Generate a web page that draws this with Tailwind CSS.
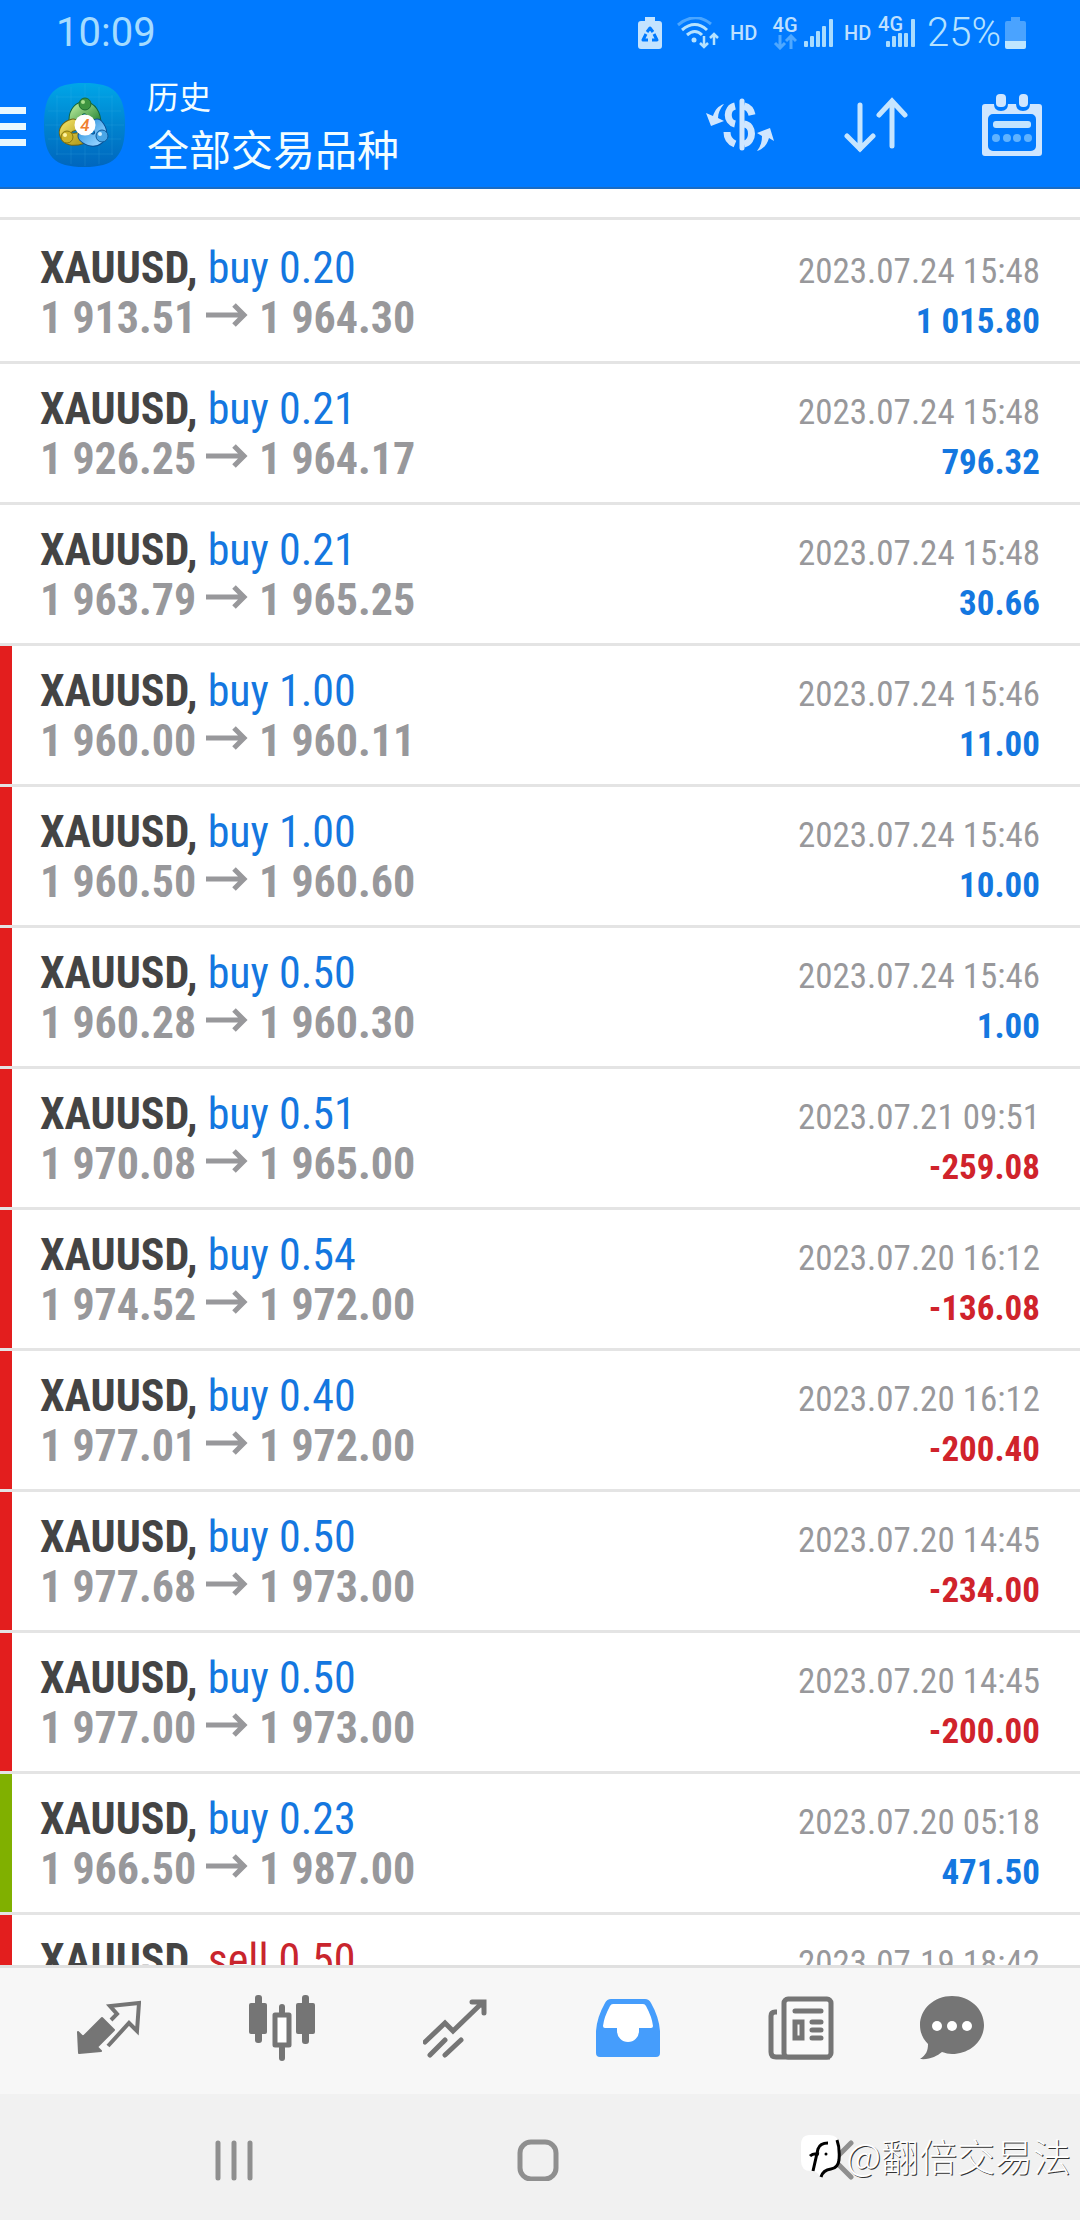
<!DOCTYPE html>
<html lang="zh-CN">
<head>
<meta charset="utf-8">
<meta name="viewport" content="width=device-width, initial-scale=1">
<title>历史</title>
<script src="https://cdn.jsdelivr.net/npm/@tailwindcss/browser@4"></script>
</head>
<body class="bg-white font-['Roboto','Noto_Sans_CJK_SC',sans-serif]">
<div class="flex h-screen flex-col overflow-hidden">

  <header class="shrink-0 border-b-2 border-[#1a6cc4] bg-[#007aff]">
    <!-- Status bar -->
    <div class="flex h-[62px] items-center pl-14 pr-[54px] pt-[3px] text-[#bfe0ff]">
      <time class="mr-auto text-[40px] leading-none text-[#a5dcff]">10:09</time>
      <svg class="h-8 w-6" viewBox="0 0 24 32" fill="none" aria-hidden="true">
        <path d="M7 0h10v4h4a3 3 0 0 1 3 3v22a3 3 0 0 1-3 3H3a3 3 0 0 1-3-3V7a3 3 0 0 1 3-3h4z" fill="#c3e3ff"/>
        <path d="M9 15l3-4 3 4M16 17l3 6h-5M10 23H5l3-6" stroke="#007aff" stroke-width="3" stroke-linejoin="round"/>
      </svg>
      <svg class="ml-[15px] h-8 w-[42px]" viewBox="0 0 42 32" fill="none" aria-hidden="true">
        <path d="M1 8Q18-6 34 7" stroke="#4ba6ff" stroke-width="3"/>
        <path d="M5 13Q18 2 30 13M10 18Q18 11 25 18" stroke="#b5e2ff" stroke-width="3"/>
        <circle cx="17" cy="23" r="2.500" fill="#b5e2ff"/>
        <path d="M27 19v11M23 26l4 4 4-4M37 28V17M33 21l4-4 4 4" stroke="#b5e2ff" stroke-width="2.500"/>
      </svg>
      <span class="ml-[11px] w-7 text-xl font-medium">HD</span>
      <span class="ml-[15px] flex w-6 flex-col items-center">
        <span class="text-xl font-medium leading-[18px]">4G</span>
        <svg class="h-4 w-6" viewBox="0 0 24 16" fill="none" stroke="#4fa8ff" stroke-width="3" aria-hidden="true"><path d="M7 1v12M2 9l5 5 5-5M18 15V3M13 7l5-5 5 5"/></svg>
      </span>
      <svg class="ml-[7px] h-7 w-[29px]" viewBox="0 0 29 28" fill="#a9dcff" aria-hidden="true"><rect x="0" y="22" width="4" height="6" rx="1"/><rect x="6" y="17" width="4" height="11" rx="1"/><rect x="12" y="12" width="4" height="16" rx="1"/><rect x="18" y="7" width="4" height="21" rx="1"/><rect x="25" y="0" width="4" height="28" rx="1"/></svg>
      <span class="ml-[11px] w-7 text-xl font-medium">HD</span>
      <span class="relative ml-[14px] h-7 w-[29px]">
        <svg class="h-7 w-[29px]" viewBox="0 0 29 28" fill="#a9dcff" aria-hidden="true"><rect x="0" y="22" width="4" height="6" rx="1"/><rect x="6" y="17" width="4" height="11" rx="1"/><rect x="12" y="14" width="4" height="14" rx="1"/><rect x="18" y="14" width="4" height="14" rx="1"/><rect x="25" y="0" width="4" height="28" rx="1"/></svg>
        <span class="absolute -left-2 -top-1 text-xl font-medium leading-[18px]">4G</span>
      </span>
      <span class="ml-3 text-[40px] font-light leading-none text-[#b5e2ff]">25%</span>
      <svg class="ml-1 h-8 w-[21px]" viewBox="0 0 21 32" aria-hidden="true"><path d="M6 0h9v4h4a2 2 0 0 1 2 2v18H0V6a2 2 0 0 1 2-2h4z" fill="#4aa3ff"/><path d="M0 24h21v6a2 2 0 0 1-2 2H2a2 2 0 0 1-2-2z" fill="#bfe6ff"/></svg>
    </div>

    <!-- App toolbar -->
    <div class="flex h-[125px] items-center pr-[38px]">
      <button type="button" aria-label="菜单" class="flex w-[26px] flex-col gap-[9px] pt-1">
        <span class="h-[7px] bg-[#e8f8ff]"></span><span class="h-[7px] bg-[#e8f8ff]"></span><span class="h-[7px] bg-[#e8f8ff]"></span>
      </button>
      <svg class="ml-[18px] h-[84px] w-[81px]" viewBox="0 0 81 84" aria-hidden="true">
        <defs>
          <linearGradient id="tile" x1="0" y1="0" x2="0" y2="1"><stop offset="0" stop-color="#00a6e8"/><stop offset=".5" stop-color="#0084cf"/><stop offset="1" stop-color="#0066bd"/></linearGradient>
          <linearGradient id="green" x1="0" y1="0" x2="1" y2="1"><stop offset="0" stop-color="#a5dc8c"/><stop offset="1" stop-color="#2c8a3a"/></linearGradient>
          <linearGradient id="gold" x1="0" y1="0" x2="1" y2="1"><stop offset="0" stop-color="#e6d458"/><stop offset="1" stop-color="#b9a322"/></linearGradient>
          <linearGradient id="blue" x1="0" y1="0" x2="1" y2="1"><stop offset="0" stop-color="#3a9be0"/><stop offset="1" stop-color="#8fd0ff"/></linearGradient>
        </defs>
        <path d="M40 0C70 0 81 10 81 42S70 84 40 84 0 74 0 42 10 0 40 0z" fill="url(#tile)"/>
        <path d="M13 12v60M27 4v77M41 1v82M55 4v77M68 12v60M4 28h73M1 42h79M4 56h73M12 71h57M12 14h57" stroke="#5cc6f0" stroke-opacity=".14" fill="none"/>
        <g fill="none" stroke-linecap="round">
          <path d="M31 37c0-17 20-17 20 4" stroke="#11633a" stroke-width="13"/><path d="M31 37c0-17 20-17 20 4" stroke="url(#green)" stroke-width="11"/>
          <path d="M37 55c-17 6-21-10-8-13" stroke="#6c6212" stroke-width="13"/><path d="M37 55c-17 6-21-10-8-13" stroke="url(#gold)" stroke-width="11"/>
          <path d="M53 42c10 11-3 21-13 11" stroke="#0a4f94" stroke-width="13"/><path d="M53 42c10 11-3 21-13 11" stroke="url(#blue)" stroke-width="11"/>
        </g>
        <circle cx="41" cy="21" r="6" fill="#3d9440" stroke="#1c6b30"/><circle cx="39" cy="19" r="2" fill="#a8e08c"/>
        <circle cx="23" cy="54" r="6" fill="#cdb42c" stroke="#86760f"/><circle cx="21" cy="52" r="2" fill="#fff4a0"/>
        <circle cx="58" cy="53" r="6" fill="#4aa6e6" stroke="#0f5a9c"/><circle cx="56" cy="51" r="2" fill="#d2f0ff"/>
        <circle cx="41" cy="42" r="10.500" fill="#fff"/>
        <text x="41" y="48" text-anchor="middle" font-family="Roboto" font-size="17" font-style="italic" font-weight="500" fill="#f08030">4</text>
      </svg>
      <div class="ml-[22px] mr-auto pt-[7px] text-[#f2fdff]">
        <h1 class="text-[32px] leading-[48px]">历史</h1>
        <p class="text-[42px] leading-[60px]">全部交易品种</p>
      </div>
      <button type="button" aria-label="货币" class="shrink-0">
        <svg class="h-[54px] w-[68px]" viewBox="0 0 68 54" fill="none" stroke="#cfe6ff" stroke-width="6" aria-hidden="true">
          <path d="M36 3v47" stroke-linecap="round" stroke-width="5"/>
          <path d="M29 8C20 10 20 24 29 26M38 8c4 1 7 4 8 9" stroke-width="7"/><path d="M38 26c10 1 10 18 0 20M21 34c0 6 3 10 8 12" stroke-width="7"/>
          <path d="M18 6c-6 2-9 6-11 12l-7-3 5 13 13-5-6-3c0-5 2-9 6-14z" fill="#cfe6ff" stroke="none"/>
          <path d="M51 53c8-3 10-7 12-13l5 3-4-13-13 5 5 3c0 5-1 10-5 15z" fill="#cfe6ff" stroke="none"/>
        </svg>
      </button>
      <button type="button" aria-label="排序" class="ml-[70px] shrink-0">
        <svg class="h-[56px] w-[64px]" viewBox="0 0 64 56" fill="none" stroke="#c6e5ff" stroke-width="5" stroke-linecap="round" aria-hidden="true">
          <path d="M16 8v44M3 39l13 13 13-13M48 49V4M35 18L48 4l13 14"/>
        </svg>
      </button>
      <button type="button" aria-label="日历" class="ml-[74px] shrink-0">
        <svg class="h-[64px] w-[60px]" viewBox="0 0 60 64" aria-hidden="true">
          <path fill-rule="evenodd" fill="#cfe6ff" d="M3 11h9q0 7 7 7t7-7h8q0 7 7 7t7-7h9a3 3 0 0 1 3 3v46a3 3 0 0 1-3 3H3a3 3 0 0 1-3-3V14a3 3 0 0 1 3-3zM11 21a5 5 0 0 0-5 5v27a5 5 0 0 0 5 5h38a5 5 0 0 0 5-5V26a5 5 0 0 0-5-5z"/>
          <rect x="14" y="1" width="10" height="13" rx="4" fill="#cfe6ff"/><rect x="37" y="1" width="9" height="13" rx="4" fill="#cfe6ff"/>
          <rect x="11" y="28" width="38" height="7" rx="3" fill="#c2e4ff"/>
          <g fill="#5fb2ff"><circle cx="14" cy="45" r="4"/><circle cx="25" cy="45" r="4"/><circle cx="35" cy="45" r="4"/><circle cx="46" cy="45" r="4"/></g>
        </svg>
      </button>
    </div>
  </header>

  <main class="min-h-0 flex-1 overflow-hidden pt-7">
    <ul id="deals" class="border-t-[3px] border-[#e4e4e4] pt-[3px] font-['Roboto_Condensed','Liberation_Sans_Narrow',sans-serif]"></ul>
  </main>

  <!-- Tabs -->
  <nav aria-label="主导航" class="flex h-[129px] shrink-0 items-center border-t-[3px] border-[#e0e0e0] bg-[#f7f7f7] pb-[6px] pl-[22px] pr-[64px] text-[#757575]">
    <a href="#quotes" aria-label="行情" class="flex flex-1 justify-center">
      <svg class="size-16" viewBox="0 0 64 64" aria-hidden="true">
        <path d="M25 22l12 12-17 17 4 4-22 2 -1-21 5 5z" fill="currentColor" stroke="currentColor" stroke-width="2" stroke-linejoin="round"/>
        <path d="M34 24l6-6-7-8 29-3-2 28-8-8-21 23" fill="none" stroke="currentColor" stroke-width="4"/>
      </svg>
    </a>
    <a href="#charts" aria-label="图表" class="flex flex-1 justify-center">
      <svg class="h-[66px] w-[66px]" viewBox="0 0 66 66" aria-hidden="true">
        <g fill="currentColor"><rect x="6" y="0" width="7" height="48" rx="3"/><rect x="0" y="8" width="18" height="31" rx="2"/><rect x="53" y="0" width="7" height="49" rx="3"/><rect x="47" y="8" width="19" height="31" rx="2"/><rect x="30" y="9" width="6" height="11" rx="3"/><rect x="30" y="50" width="6" height="16" rx="3"/></g>
        <rect x="26" y="20" width="14" height="30" fill="#fff" stroke="currentColor" stroke-width="5" stroke-linejoin="round"/>
      </svg>
    </a>
    <a href="#trade" aria-label="交易" class="flex flex-1 justify-center">
      <svg class="size-16" viewBox="0 0 64 64" fill="none" stroke="currentColor" stroke-width="5" stroke-linecap="round" aria-hidden="true">
        <path d="M2 46l20-19 8 8L59 7M49 6h12v11M7 59l15-15M22 59l16-15" /><path d="M52 4h11v13z" fill="currentColor" stroke="none"/>
      </svg>
    </a>
    <a href="#history" aria-label="历史" aria-current="page" class="flex flex-1 justify-center text-[#459dfc]">
      <svg class="size-16" viewBox="0 0 64 64" aria-hidden="true">
        <path fill="currentColor" d="M15 3h34q4 0 6 4 8 14 9 28v22q0 4-4 4H4q-4 0-4-4V35Q1 21 9 7q2-4 6-4z"/>
        <path fill="#fff" d="M17 8h30q2 0 3 2 6 11 7 20 0 2-2 2H43v3a11 11 0 0 1-22 0v-3H9q-2 0-2-2 1-9 7-20 1-2 3-2z"/>
      </svg>
    </a>
    <a href="#news" aria-label="新闻" class="flex flex-1 justify-center">
      <svg class="h-16 w-[66px]" viewBox="0 0 66 64" fill="none" stroke="currentColor" stroke-width="5" aria-hidden="true">
        <path d="M9 16H7q-4 0-4 4v36q0 5 5 5h54" stroke-linejoin="round"/>
        <rect x="16" y="3" width="47" height="58" rx="4" fill="#fafafa"/>
        <path d="M27 15h26M44 26h9M44 34h9M44 42h9" stroke-linecap="round"/>
        <rect x="27" y="26" width="7" height="16"/>
      </svg>
    </a>
    <a href="#messages" aria-label="消息" class="flex w-32 justify-center">
      <svg class="size-16" viewBox="0 0 64 64" aria-hidden="true">
        <path fill="currentColor" d="M32 0C14 0 0 13 0 29c0 8 3 14 8 19 0 7-2 11-8 15 10 1 17-3 22-7 4 1 6 2 10 2 18 0 32-13 32-29S50 0 32 0z"/>
        <g fill="#fff"><circle cx="17" cy="30" r="5"/><circle cx="32" cy="30" r="5"/><circle cx="47" cy="30" r="5"/></g>
      </svg>
    </a>
  </nav>

  <!-- System navigation -->
  <footer class="relative grid h-[126px] shrink-0 grid-cols-3 items-center justify-items-center bg-[#f1f1f1] pl-[82px] pr-[86px] pt-[5px] text-[#8f8f8f]">
    <button type="button" aria-label="最近任务"><svg class="h-[42px] w-[38px]" viewBox="0 0 38 42" fill="none" stroke="currentColor" stroke-width="5" stroke-linecap="round"><path d="M3 4v35M19 4v35M35 4v35"/></svg></button>
    <button type="button" aria-label="主屏幕"><svg class="h-[42px] w-[42px]" viewBox="0 0 42 42" fill="none" stroke="currentColor" stroke-width="5"><rect x="3" y="3" width="36" height="37" rx="11"/></svg></button>
    <button type="button" aria-label="返回"><svg class="h-[42px] w-[24px]" viewBox="0 0 24 42" fill="none" stroke="currentColor" stroke-width="5" stroke-linecap="round"><path d="M21 4L4 21l17 17"/></svg></button>
    <div class="absolute right-[9px] top-[37px] flex items-center gap-[5px]">
      <svg class="h-[48px] w-[40px]" viewBox="0 0 40 48" fill="none" aria-hidden="true">
        <path d="M8 4h20q10 0 10 10v16q0 9-9 10-7 0-10 6-2-6-9-6-10 0-10-10V14Q0 4 8 4z" fill="#fff"/>
        <path d="M36 9q3 8 2 20-1 8-8 9-8 1-10 8" stroke="#000" stroke-width="3"/>
        <path d="M12 40l5-22q2-6 10-6M9 25q3-3 9-2" stroke="#000" stroke-width="3"/>
        <circle cx="25" cy="23" r="1.500" fill="#000"/>
      </svg>
      <span class="font-['Noto_Sans_CJK_SC',sans-serif] text-[38px] font-light leading-[44px] text-white [text-shadow:1px_1px_0_#333]">@翻倍交易法</span>
    </div>
  </footer>
</div>

<script>
  // time, side, volume, open, close, profit, marker
  const deals = [
    ['2023.07.24 15:48', 'buy', '0.20', '1 913.51', '1 964.30', '1 015.80', ''],
    ['2023.07.24 15:48', 'buy', '0.21', '1 926.25', '1 964.17', '796.32', ''],
    ['2023.07.24 15:48', 'buy', '0.21', '1 963.79', '1 965.25', '30.66', ''],
    ['2023.07.24 15:46', 'buy', '1.00', '1 960.00', '1 960.11', '11.00', 'red'],
    ['2023.07.24 15:46', 'buy', '1.00', '1 960.50', '1 960.60', '10.00', 'red'],
    ['2023.07.24 15:46', 'buy', '0.50', '1 960.28', '1 960.30', '1.00', 'red'],
    ['2023.07.21 09:51', 'buy', '0.51', '1 970.08', '1 965.00', '-259.08', 'red'],
    ['2023.07.20 16:12', 'buy', '0.54', '1 974.52', '1 972.00', '-136.08', 'red'],
    ['2023.07.20 16:12', 'buy', '0.40', '1 977.01', '1 972.00', '-200.40', 'red'],
    ['2023.07.20 14:45', 'buy', '0.50', '1 977.68', '1 973.00', '-234.00', 'red'],
    ['2023.07.20 14:45', 'buy', '0.50', '1 977.00', '1 973.00', '-200.00', 'red'],
    ['2023.07.20 05:18', 'buy', '0.23', '1 966.50', '1 987.00', '471.50', 'green'],
    ['2023.07.19 18:42', 'sell', '0.50', '', '', '', 'red'],
  ];
  const marker = { '': 'bg-transparent', red: 'bg-[#e31e1e]', green: 'bg-[#80b000]' };
  const side = { buy: 'text-[#1477e0]', sell: 'text-[#c9252d]' };
  const prices = (open, close, profit) => `
        <div class="flex h-[50px] items-baseline justify-between whitespace-nowrap text-[44px] font-bold leading-[50px] text-[#98989b]">
          <span class="flex items-baseline"><span class="w-[166px]">${open}</span><svg class="h-9 w-[42px]" viewBox="0 0 42 36" fill="none" stroke="currentColor" stroke-width="5" role="img" aria-label="→"><path d="M0 18h38M28 8l10 10-10 10"/></svg><span class="ml-[11px]">${close}</span></span>
          <span class="text-[35px] ${profit.startsWith('-') ? 'text-[#d0232b]' : 'text-[#1477e0]'}">${profit}</span>
        </div>`;
  document.getElementById('deals').innerHTML = deals.map(([time, type, volume, open, close, profit, mark]) => `
    <li class="flex border-b-[3px] border-[#e4e4e4]">
      <span class="w-3 shrink-0 ${marker[mark]}"></span>
      <div class="h-[138px] flex-1 pl-7 pr-10 pt-5">
        <div class="flex h-[50px] items-baseline justify-between whitespace-nowrap text-[44px] leading-[50px]">
          <span><b class="font-bold text-[#444]">XAUUSD,</b> <span class="${side[type]}">${type} ${volume}</span></span>
          <time class="text-[35px] text-[#98989b]">${time}</time>
        </div>${open ? prices(open, close, profit) : ''}
      </div>
    </li>`).join('');
</script>
</body>
</html>
